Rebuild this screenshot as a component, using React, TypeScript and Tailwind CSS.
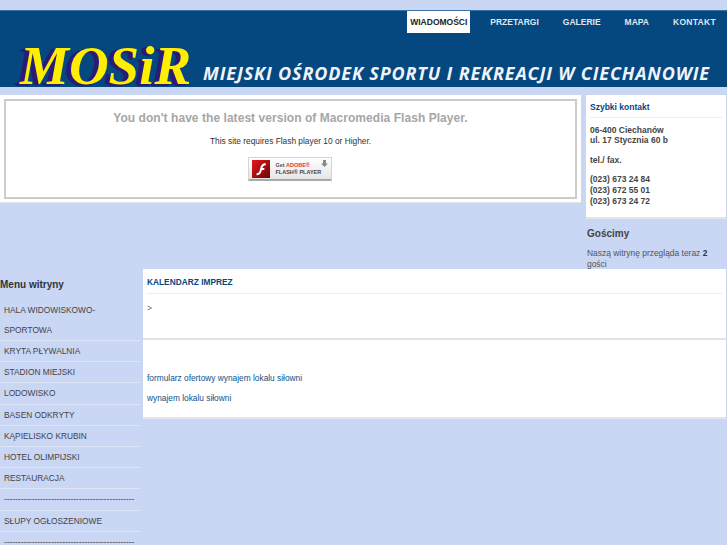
const navItems = ["WIADOMOŚCI", "PRZETARGI", "GALERIE", "MAPA", "KONTAKT"];

const dashes = "-----------------------------------------------";

const menuItems = [
  "HALA WIDOWISKOWO-SPORTOWA",
  "KRYTA PŁYWALNIA",
  "STADION MIEJSKI",
  "LODOWISKO",
  "BASEN ODKRYTY",
  "KĄPIELISKO KRUBIN",
  "HOTEL OLIMPIJSKI",
  "RESTAURACJA",
  dashes,
  "SŁUPY OGŁOSZENIOWE",
  dashes,
];

function FlashButton() {
  return (
    <div className="w-[84px] h-[24px] flex items-center gap-[6px] pl-[3px] rounded-[1px] border border-[#d4d4d4] border-b-2 border-b-[#a9a9a9] bg-gradient-to-b from-white to-[#e6e6e6] relative">
      {/* Flash logo */}
      <svg width="18" height="18" viewBox="0 0 19 19" className="shrink-0">
        <defs>
          <linearGradient id="flashRed" x1="0" y1="0" x2="1" y2="1">
            <stop offset="0" stopColor="#e2171c" />
            <stop offset="1" stopColor="#6e0606" />
          </linearGradient>
        </defs>
        <rect width="19" height="19" fill="url(#flashRed)" />
        <path
          d="M14.500 3.500c-3.600 0-4.900 2-5.600 4.600l-.9 3.300c-.4 1.500-1 2.400-3.200 2.700v2c3.300-.2 4.700-1.800 5.300-4.300l.3-1.200h2.600V8.500h-2.100c.5-1.700 1.400-2.800 3.600-3z"
          fill="#fff"
        />
      </svg>
      <div className="text-[5.500px] leading-[7px] font-bold text-[#555] whitespace-nowrap">
        <div>
          Get <span className="text-[#e8343a]">ADOBE®</span>
        </div>
        <div className="text-[#444]">FLASH® PLAYER</div>
      </div>
      <svg width="7" height="8" viewBox="0 0 7 8" className="absolute right-[3px] top-[2px]">
        <path d="M2 0h3v3.500h2L3.500 7 0 3.500h2z" fill="#8a8a8a" />
      </svg>
    </div>
  );
}

export default function App() {
  return (
    <div className="h-[545px] overflow-hidden bg-[#c9d6f4] pt-[10px] font-['Liberation_Sans',Arial,sans-serif] text-[#444]">
      {/* Header */}
      <header className="h-[77px] bg-[#05477f] border-t border-[#3c6fa3]">
        <nav className="flex justify-end h-[22px] pr-[8px]">
          {navItems.map((item, i) => (
            <a
              key={item}
              href="#"
              className={`flex items-center px-[3px] h-[22px] text-[8.500px] font-bold ${
                i === 0
                  ? "w-[63px] justify-center mr-[17px] bg-white text-[#222]"
                  : "mr-[18px] last:mr-0 last:tracking-[0.3px] text-[#dfe6f0]"
              }`}
            >
              {item}
            </a>
          ))}
        </nav>
        <div className="flex items-end h-[54px] pl-[20px]">
          <div className="w-[183px] h-[44px] flex items-center font-['Liberation_Serif',serif] italic font-bold text-[55px] leading-none text-[#ffee00] [text-shadow:-3px_2px_0_#2b1a78,-5px_1px_0_#2b1a78]">
            MOSiR
          </div>
          <div className="pb-[4px] font-['Open_Sans',sans-serif] italic font-bold text-[18px] leading-[20px] tracking-[0.85px] whitespace-nowrap text-[#eef3fa]">
            MIEJSKI OŚRODEK SPORTU I REKREACJI W CIECHANOWIE
          </div>
        </div>
      </header>

      {/* Top row: flash notice and contact */}
      <div className="flex mt-[8px] items-start">
        <div className="w-[581px] h-[108px] shrink-0 bg-white p-[4px] border-b border-[#e4e6ec]">
          <div className="h-[100px] border-2 border-[#cccccc] flex flex-col items-center pt-[9px]">
            <h2 className="text-[12px] leading-[16px] tracking-[0.05px] font-bold text-[#a6a6a6]">
              You don't have the latest version of Macromedia Flash Player.
            </h2>
            <p className="mt-[9px] text-[8.330px] leading-[12px] text-[#333]">
              This site requires Flash player 10 or Higher.
            </p>
            <div className="mt-[10px] mr-[2px]">
              <FlashButton />
            </div>
          </div>
        </div>
        <aside className="w-[140px] ml-[5px] shrink-0">
          <div className="h-[124px] bg-white border-b-2 border-[#e6e6e8] px-[4px] pt-[7px] text-[8.500px] leading-[10.600px] font-bold">
            <h3 className="text-[#05477f] pb-[4px] border-b border-[#eeeeee]">Szybki kontakt</h3>
            <p className="mt-[7px]">
              06-400 Ciechanów
              <br />
              ul. 17 Stycznia 60 b
            </p>
            <p className="mt-[9px]">tel./ fax.</p>
            <p className="mt-[9px]">
              (023) 673 24 84
              <br />
              (023) 672 55 01
              <br />
              (023) 673 24 72
            </p>
          </div>
          <div className="pl-px">
            <h3 className="mt-[8px] text-[10px] leading-[14px] font-bold">Gościmy</h3>
            <p className="mt-[7px] text-[8.440px] leading-[11px] text-[#555]">
              Naszą witrynę przegląda teraz <b className="text-[#333]">2</b> gości
            </p>
          </div>
        </aside>
      </div>

      {/* Bottom row: menu and content */}
      <div className="flex pr-px">
        <nav className="w-[143px] shrink-0">
          <h3 className="mt-[8px] text-[10px] leading-[13px] font-bold text-[#333]">Menu witryny</h3>
          <ul className="mt-[8.500px] w-[140px]">
            {menuItems.map((item, i) => (
              <li
                key={i}
                className="border-b border-[#dfe6f8] pl-[4px] text-[8.330px] leading-[20.200px] text-[#444] whitespace-nowrap"
              >
                {i === 0 ? (
                  <>
                    HALA WIDOWISKOWO-
                    <br />
                    SPORTOWA
                  </>
                ) : (
                  item
                )}
              </li>
            ))}
          </ul>
        </nav>
        <main className="flex-1 mt-[-1px]">
          <section className="h-[71px] bg-white border-b-2 border-[#e4e4e4] px-[4px] pt-[7px]">
            <h2 className="text-[8.330px] leading-[12px] font-bold text-[#05477f] pb-[5px] border-b border-[#eeeeee]">
              KALENDARZ IMPREZ
            </h2>
            <p className="mt-[8px] text-[8.330px] leading-[12px] text-[#666]">&gt;</p>
          </section>
          <section className="h-[79px] bg-white border-b-2 border-[#e4e6ec] px-[4px] pt-[32px] text-[8.330px] leading-[12px] text-[#0f5088]">
            <p>formularz ofertowy wynajem lokalu siłowni</p>
            <p className="mt-[8px]">wynajem lokalu siłowni</p>
          </section>
        </main>
      </div>
    </div>
  );
}
